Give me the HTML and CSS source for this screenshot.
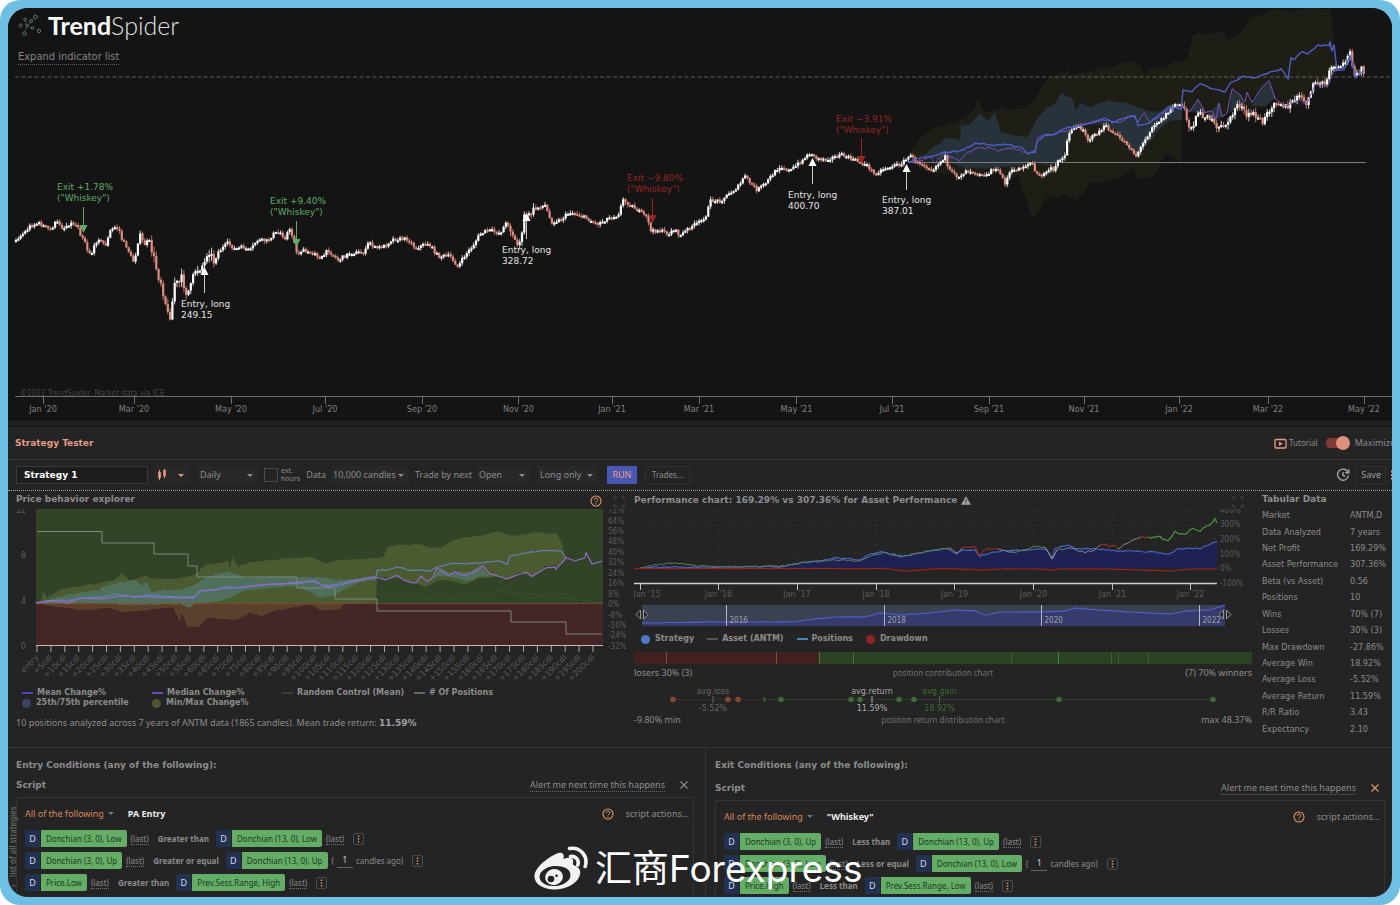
FILE: index.html
```html
<!DOCTYPE html>
<html lang="en">
<head>
<meta charset="utf-8">
<title>TrendSpider - Strategy Tester</title>
<link rel="stylesheet" href="styles.css">
</head>
<body>
<svg class="defs" aria-hidden="true">
  <symbol id="i-help" viewBox="0 0 12 12"><circle cx="6" cy="6" r="5" fill="none" stroke="currentColor" stroke-width="1.1"/><path d="M4.3 4.8a1.7 1.7 0 1 1 2.5 1.5c-.6.3-.8.6-.8 1.1" fill="none" stroke="currentColor" stroke-width="1"/><circle cx="6" cy="8.8" r=".6" fill="currentColor"/></symbol>
  <symbol id="i-expand" viewBox="0 0 12 12"><path d="M1 4V1h3M8 1h3v3M11 8v3H8M4 11H1V8" fill="none" stroke="currentColor" stroke-width="1"/></symbol>
  <symbol id="i-close" viewBox="0 0 10 10"><path d="M1.5 1.5l7 7M8.500 1.500l-7 7" fill="none" stroke="currentColor" stroke-width="1.100"/></symbol>
  <symbol id="i-more" viewBox="0 0 11 12"><rect x=".5" y=".5" width="10" height="11" rx="1.500" fill="none" stroke="#4a4a4a"/><path d="M5.500 2.500v1.600M5.500 5.200v1.600M5.500 7.900v1.600" stroke="#e09468" stroke-width="1.500"/></symbol>
</svg>

<div class="frame">
<main class="app">

<section class="price">
  <div class="price-head">
    <a class="brand" href="#">
      <svg class="brand-mark" viewBox="0 0 24 22" fill="none" stroke="#5c7b68" aria-hidden="true"><circle cx="2.500" cy="11.500" r="1.500"/><circle cx="7" cy="5.500" r="1.300"/><circle cx="9" cy="11.500" r="1.300"/><circle cx="13" cy="7" r="1.500"/><circle cx="17.500" cy="3" r="1.800"/><circle cx="14.500" cy="14" r="1.300"/><circle cx="6.500" cy="19.500" r="1.700"/><circle cx="21" cy="17" r="1.700"/><path d="M7.500 7.500l1 2.500M8.500 13l-1.500 4.500M10.500 11l1.500-2.500M14.500 5.800l1.500-1.500M10.500 12.500l2 .8" stroke-width=".6"/></svg>
      <span class="brand-name"><b>Trend</b>Spider</span>
    </a>
    <button class="link expand" type="button">Expand indicator list</button>
  </div>
  <svg class="chart" id="price-chart" viewBox="8 8 1384 417" role="img" aria-label="ANTM daily price chart"></svg>
</section>

<section class="tester">
  <div class="tester-head">
    <h1>Strategy Tester</h1>
    <div class="head-tools">
      <a class="tutorial" href="#"><svg viewBox="0 0 13 11" aria-hidden="true"><rect x="1" y="1.500" width="11" height="8.500" rx="1" fill="none" stroke="#e39a86" stroke-width="1.300"/><path d="M5 3.500l3.800 2.200L5 8z" fill="#e39a86"/></svg>Tutorial</a>
      <label class="toggle"><input type="checkbox" checked><span class="track"></span>Maximize</label>
    </div>
  </div>

  <form class="toolbar">
    <input class="name" type="text" value="Strategy 1" aria-label="Strategy name">
    <button class="candle-btn" type="button" aria-label="Chart type"><svg viewBox="0 0 10 12" aria-hidden="true"><path d="M2.500 1v10M7.500 0v9" stroke="#e39a86"/><path d="M2.500 3v6M7.500 1v6" stroke="#e39a86" stroke-width="2.600"/></svg><i class="caret"></i></button>
    <span class="pick w60"><select aria-label="Interval"><option>Daily</option></select></span>
    <label class="ext"><input type="checkbox"><span>ext.<br>hours</span></label>
    <label class="field" for="candles">Data</label>
    <span class="pick w77"><select id="candles"><option>10,000 candles</option></select></span>
    <label class="field" for="trade">Trade by next</label>
    <span class="pick w52"><select id="trade"><option>Open</option></select></span>
    <span class="pick w60"><select aria-label="Direction"><option>Long only</option></select></span>
    <button class="run" type="button">RUN</button>
    <button class="ghost" type="button">Trades...</button>
    <span class="grow"></span>
    <button class="icon-btn" type="button" aria-label="History"><svg viewBox="0 0 14 14" fill="none" stroke="#a5a5a5" stroke-width="1.400" aria-hidden="true"><path d="M12 4.200A5.500 5.500 0 1 0 12.500 7.500M12.800 1.200v3.600H9.200M7 4v3.300l2.300 1.200"/></svg></button>
    <button class="ghost save" type="button">Save</button>
    <button class="icon-btn dots" type="button" aria-label="More"><svg viewBox="0 0 4 12" aria-hidden="true"><path d="M2 1.500v2M2 5v2M2 8.500v2" stroke="#e39a86" stroke-width="2"/></svg></button>
  </form>

  <div class="results">
    <section class="col">
      <div class="col-title"><h2>Price behavior explorer</h2><svg class="ico help" aria-hidden="true"><use href="#i-help"/></svg><svg class="ico ex" aria-hidden="true"><use href="#i-expand"/></svg></div>
      <svg class="chart" id="behavior-chart" viewBox="16 509 610 179" role="img" aria-label="Price behavior after entry"></svg>
      <ul class="legend grid4">
        <li><i class="line" style="background:#4b48b8"></i>Mean Change%</li>
        <li><i class="line" style="background:#6a4ab5"></i>Median Change%</li>
        <li><i class="line" style="background:#3c3c3c"></i>Random Control (Mean)</li>
        <li><i class="line" style="background:#666"></i># Of Positions</li>
        <li><i class="dot" style="background:#3b4664"></i>25th/75th percentile</li>
        <li><i class="dot" style="background:#4d5630"></i>Min/Max Change%</li>
      </ul>
      <p class="summary">10 positions analyzed across 7 years of ANTM data (1865 candles). Mean trade return: <b>11.59%</b></p>
    </section>

    <section class="col">
      <div class="col-title perf"><h2>Performance chart: 169.29% vs 307.36% for Asset Performance</h2><svg class="warn" viewBox="0 0 12 10" aria-hidden="true"><path d="M6 0l6 10H0z" fill="#a0a0a0"/><path d="M6 3.500v3M6 7.500v1" stroke="#242424" stroke-width="1.200"/></svg><svg class="ico ex last" aria-hidden="true"><use href="#i-expand"/></svg></div>
      <svg class="chart" id="perf-chart" viewBox="634 509 620 121" role="img" aria-label="Strategy and asset performance"></svg>
      <ul class="legend flow">
        <li><i class="dot" style="background:#4c78c8"></i>Strategy</li>
        <li><i class="line" style="background:#555"></i>Asset (ANTM)</li>
        <li><i class="line" style="background:#4a86b0"></i>Positions</li>
        <li><i class="dot" style="background:#8c2622"></i>Drawdown</li>
      </ul>
      <svg class="chart" id="contrib-chart" viewBox="634 648 620 18" role="img" aria-label="Position contribution"></svg>
      <div class="ends"><span>losers 30% (3)</span><small>position contribution chart</small><span>(7) 70% winners</span></div>
      <svg class="chart" id="dist-chart" viewBox="634 681 620 32" role="img" aria-label="Position return distribution"></svg>
      <div class="ends"><span>-9.80% min</span><small>position return distribution chart</small><span>max 48.37%</span></div>
    </section>

    <section class="col">
      <div class="col-title"><h2>Tabular Data</h2></div>
      <table class="stats">
        <tr><th scope="row">Market</th><td>ANTM,D</td></tr>
        <tr><th scope="row">Data Analyzed</th><td>7 years</td></tr>
        <tr><th scope="row">Net Profit</th><td>169.29%</td></tr>
        <tr><th scope="row">Asset Performance</th><td>307.36%</td></tr>
        <tr><th scope="row">Beta (vs Asset)</th><td>0.56</td></tr>
        <tr><th scope="row">Positions</th><td>10</td></tr>
        <tr><th scope="row">Wins</th><td>70% (7)</td></tr>
        <tr><th scope="row">Losses</th><td>30% (3)</td></tr>
        <tr><th scope="row">Max Drawdown</th><td>-27.86%</td></tr>
        <tr><th scope="row">Average Win</th><td>18.92%</td></tr>
        <tr><th scope="row">Average Loss</th><td>-5.52%</td></tr>
        <tr><th scope="row">Average Return</th><td>11.59%</td></tr>
        <tr><th scope="row">R/R Ratio</th><td>3.43</td></tr>
        <tr><th scope="row">Expectancy</th><td>2.10</td></tr>
      </table>
    </section>
  </div>

  <div class="conditions">
    <section class="cond">
      <h2>Entry Conditions (any of the following):</h2>
      <div class="script-head"><h3>Script</h3><button class="link alert" type="button">Alert me next time this happens</button><button class="x" type="button" aria-label="Remove"><svg aria-hidden="true"><use href="#i-close"/></svg></button></div>
      <div class="box">
        <div class="box-head"><button class="all" type="button">All of the following<i class="caret"></i></button><b>PA Entry</b><span class="grow"></span><svg class="ico help" aria-hidden="true"><use href="#i-help"/></svg><button class="actions" type="button">script actions...</button></div>
        <div class="rule"><i class="d">D</i><button class="chip" type="button">Donchian (3, 0), Low</button><a href="#">(last)</a><b>Greater than</b><i class="d">D</i><button class="chip" type="button">Donchian (13, 0), Low</button><a href="#">(last)</a><svg class="more" aria-hidden="true"><use href="#i-more"/></svg></div>
        <div class="rule"><i class="d">D</i><button class="chip" type="button">Donchian (3, 0), Up</button><a href="#">(last)</a><b>Greater or equal</b><i class="d">D</i><button class="chip" type="button">Donchian (13, 0), Up</button><label class="ago">(<input type="text" value="1">candles ago)</label><svg class="more" aria-hidden="true"><use href="#i-more"/></svg></div>
        <div class="rule"><i class="d">D</i><button class="chip" type="button">Price.Low</button><a href="#">(last)</a><b>Greater than</b><i class="d">D</i><button class="chip" type="button">Prev.Sess.Range, High</button><a href="#">(last)</a><svg class="more" aria-hidden="true"><use href="#i-more"/></svg></div>
      </div>
    </section>
    <section class="cond exit">
      <h2>Exit Conditions (any of the following):</h2>
      <div class="script-head"><h3>Script</h3><button class="link alert" type="button">Alert me next time this happens</button><button class="x hot" type="button" aria-label="Remove"><svg aria-hidden="true"><use href="#i-close"/></svg></button></div>
      <div class="box">
        <div class="box-head"><button class="all" type="button">All of the following<i class="caret"></i></button><b>"Whiskey"</b><span class="grow"></span><svg class="ico help" aria-hidden="true"><use href="#i-help"/></svg><button class="actions" type="button">script actions...</button></div>
        <div class="rule"><i class="d">D</i><button class="chip" type="button">Donchian (3, 0), Up</button><a href="#">(last)</a><b>Less than</b><i class="d">D</i><button class="chip" type="button">Donchian (13, 0), Up</button><a href="#">(last)</a><svg class="more" aria-hidden="true"><use href="#i-more"/></svg></div>
        <div class="rule"><i class="d">D</i><button class="chip" type="button">Donchian (3, 0), Low</button><a href="#">(last)</a><b>Less or equal</b><i class="d">D</i><button class="chip" type="button">Donchian (13, 0), Low</button><label class="ago">(<input type="text" value="1">candles ago)</label><svg class="more" aria-hidden="true"><use href="#i-more"/></svg></div>
        <div class="rule"><i class="d">D</i><button class="chip" type="button">Price.High</button><a href="#">(last)</a><b>Less than</b><i class="d">D</i><button class="chip" type="button">Prev.Sess.Range, Low</button><a href="#">(last)</a><svg class="more" aria-hidden="true"><use href="#i-more"/></svg></div>
      </div>
    </section>
  </div>
  <a class="side" href="#"><span>&#8250;</span>list of all strategies</a>
</section>

</main>
<div class="watermark">
  <svg viewBox="0 0 56 46" aria-hidden="true">
    <path d="M22 8c5-2.500 9-1 7.500 5 6-2.500 11-1 9.500 4-.4 1.500.2 2 1.500 2.500 5 1.800 7 5.500 5 10.500C42.500 38 32 43.500 20.500 43.500 9 43.500.5 38 .5 30.500.500 22 13 12 22 8z" fill="#f2f2f2"/>
    <ellipse cx="21" cy="30" rx="15.500" ry="10" transform="rotate(-6 21 30)" fill="#242424"/>
    <ellipse cx="20" cy="31" rx="9" ry="8" transform="rotate(-15 20 31)" fill="#f2f2f2"/>
    <circle cx="17" cy="33" r="3.300" fill="#242424"/><circle cx="22.500" cy="29.800" r="1.300" fill="#242424"/>
    <path d="M36.500 10.500c5-1 9 3.500 7.300 8.500M35.500 2.500c10.500-2 19 7.500 15.700 18" fill="none" stroke="#f2f2f2" stroke-width="3.600" stroke-linecap="round"/>
  </svg>
  <span>汇商Forexpress</span>
</div>
</div>
<script src="charts.js"></script>
</body>
</html>
```
FILE: styles.css
```css
* { box-sizing: border-box; }
body { margin: 0; background: #fff; font: 9px/16px "Noto Sans", sans-serif; color: #8c8c8c; }
h1, h2, h3, p, ul { margin: 0; padding: 0; }
h1, h2, h3 { font: bold 9px/16px "DejaVu Sans", sans-serif; }
ul { list-style: none; }
a { color: inherit; text-decoration: none; }
button, input, select { font: inherit; color: inherit; background: none; border: 0; padding: 0; margin: 0; border-radius: 0; }
.defs { position: absolute; width: 0; height: 0; }
.chart { display: block; width: 100%; height: auto; }
.grow { flex: 1; }
.caret { display: inline-block; border: 3px solid transparent; border-top-color: currentColor; border-bottom: 0; }

.frame { position: relative; height: 100vh; padding: 8px; background: #6fbfe5; border-radius: 20px; overflow: hidden; }
.app { height: 100%; display: flex; flex-direction: column; background: #242424; border-radius: 20px; overflow: hidden; }

/* price chart */
.price { position: relative; background: #141414; }
.price-head { position: absolute; top: 4px; left: 10px; display: flex; flex-direction: column; align-items: flex-start; gap: 12px; }
.brand { display: flex; align-items: center; gap: 6px; height: 26px; color: #e0e0e0; }
.brand-mark { width: 24px; height: 22px; }
.brand-name { font: 300 25px/26px Lato, sans-serif; }
.brand-name b { font-weight: 700; color: #fff; }
.link { border-bottom: 1px dotted #666; line-height: 12px; }
.expand { font: 11px/14px "DejaVu Sans Condensed", "DejaVu Sans", sans-serif; color: #858585; }

/* strategy tester */
.tester { position: relative; flex: 1; min-height: 0; display: flex; flex-direction: column; border-top: 2px solid #191919; }
.tester-head { flex: none; height: 33px; padding: 0 0 0 7px; display: flex; align-items: center; justify-content: space-between; border-bottom: 1px dotted #444; }
h1 { color: #e39a86; }
.head-tools { display: flex; align-items: center; gap: 8px; margin-right: -3px; }
.tutorial { display: flex; align-items: center; gap: 2px; font-size: 8px; }
.tutorial svg { width: 13px; height: 11px; }
.toggle { display: flex; align-items: center; gap: 5px; }
.toggle input { position: absolute; opacity: 0; }
.track { width: 24px; height: 14px; display: flex; justify-content: flex-end; background: linear-gradient(#7f3a34, #7f3a34) 0 50% / 18px 10px no-repeat; border-radius: 7px; }
.track::after { content: ""; width: 14px; height: 14px; border-radius: 50%; background: #de8f7e; }

.toolbar { flex: none; height: 31px; padding: 0 0 0 8px; display: flex; align-items: center; border-bottom: 1px dotted #a0a0a0; }
.name { width: 132px; height: 18px; margin-right: 7px; padding: 0 7px; background: #1d1d1d; border: 1px solid #3a3a3a; color: #fff; font: bold 9px/16px "DejaVu Sans", sans-serif; }
.candle-btn { width: 34px; height: 18px; margin-right: 9px; display: flex; align-items: center; justify-content: space-between; padding: 0 5px 0 2px; background: #282828; color: #e39a86; }
.candle-btn svg { width: 10px; height: 12px; }
.pick { position: relative; height: 18px; display: flex; background: #282828; }
.pick::after { content: ""; position: absolute; right: 5px; top: 8px; border: 3px solid transparent; border-top-color: #8c8c8c; border-bottom: 0; pointer-events: none; }
.pick select { width: 100%; appearance: none; padding: 0 2px; }
.w52 { width: 53px; margin-right: 8px; }
.w60 { width: 60px; margin-right: 6px; }
.w77 { width: 78px; margin-right: 6px; }
.ext { display: flex; align-items: center; gap: 3px; font-size: 7px; line-height: 8px; margin-right: 6px; }
.ext input { appearance: none; width: 14px; height: 14px; border: 1px solid #4a4a4a; }
.field { margin-right: 5px; }
.run { width: 30px; height: 18px; margin: 0 8px 0 3px; background: #4856b4; color: #e3a27a; }
.ghost { height: 18px; padding: 0 6px; border: 1px solid #2e2e2e; font-size: 8px; line-height: 14px; }
.icon-btn { display: flex; margin-right: 6px; }
.icon-btn svg { width: 14px; height: 14px; }
.save { padding: 0 4px; font-size: 9px; color: #a0a0a0; margin-right: 4px; }
.dots { margin-right: -2px; }
.dots svg { width: 4px; height: 12px; }

.results { flex: none; height: 257px; padding: 0 0 0 8px; display: grid; grid-template-columns: 610fr 620fr 130fr; gap: 8px; border-bottom: 1px dotted #444; }
.col { min-width: 0; }
.col-title { height: 18px; display: flex; align-items: flex-start; }
.col-title h2 { flex: none; }
.perf { align-items: center; }
.ico { width: 12px; height: 12px; flex: none; }
.help { color: #e39a68; }
.ex { color: #55443f; }
.col-title .help { margin: 4px 11px 0 auto; }
.col-title .help + .ex { margin: 5px 1px 0 0; }
.last { margin: 4px 10px 0 auto; }
.warn { width: 10px; height: 9px; margin-left: 4px; }
.legend { font: bold 8px/10px "DejaVu Sans", sans-serif; }
.legend li { display: flex; align-items: center; gap: 4px; white-space: nowrap; }
.line { width: 11px; height: 2px; }
.dot { width: 9px; height: 9px; border-radius: 50%; margin-right: 1px; }
.grid4 { display: grid; grid-template-columns: 130px 130px 132px 120px; padding-left: 6px; }
.flow { display: flex; gap: 13px; height: 18px; align-items: center; padding-left: 7px; }
.summary { line-height: 30px; white-space: nowrap; }
.summary b { font: bold 9px/30px "DejaVu Sans", sans-serif; color: #a0a0a0; }
.ends { display: grid; grid-template-columns: 1fr auto 1fr; height: 15px; line-height: 14px; padding-right: 2px; }
.ends span:last-child { text-align: right; }
.ends small { font-size: 8px; color: #707070; }
.stats { width: 100%; height: 230px; margin-top: -2px; border-collapse: collapse; font: 9px/12px "DejaVu Sans Condensed", "DejaVu Sans", sans-serif; }
.stats th { width: 88px; padding: 0; text-align: left; font-weight: normal; white-space: nowrap; }
.stats td { padding: 0; white-space: nowrap; }

/* conditions */
.conditions { flex: 1; min-height: 0; display: grid; grid-template-columns: 698fr 686fr; }
.cond { min-width: 0; display: flex; flex-direction: column; padding: 9px 11px 0 8px; border-right: 1px dotted #484848; }
.exit { padding: 9px 7px 0 9px; border-right: 0; }
.script-head { display: flex; align-items: center; height: 16px; margin: 4px 0; }
.exit .script-head { margin-top: 7px; }
.script-head h3 { flex: 1; }
.x { display: flex; margin: 0 5px 0 14px; }
.x svg { width: 10px; height: 10px; }
.hot { color: #e39a68; }
.box { flex: 1; border: 1px solid #343434; border-bottom: 0; padding: 8px 4px 0 8px; display: flex; flex-direction: column; gap: 5px; }
.box-head { display: flex; align-items: center; height: 16px; margin-bottom: 3px; }
.box-head b { color: #eee; }
.all { color: #d9865c; margin-right: 14px; }
.all .caret { color: #777; margin-left: 4px; vertical-align: 2px; }
.actions { margin-left: 12px; }
.rule { display: flex; align-items: center; flex: none; height: 17px; font-size: 8px; white-space: nowrap; }
.d { width: 15px; height: 17px; margin-right: 1px; background: #223150; color: #d5dbe8; font: 9px/17px "Noto Sans", sans-serif; text-align: center; border-radius: 2px 0 0 2px; }
.chip { height: 17px; padding: 0 5px; background: #64ad66; color: #1c3a20; border-radius: 0 2px 2px 0; }
.rule a { margin: 0 9px 0 4px; border-bottom: 1px dotted #777; line-height: 11px; }
.rule b { margin-right: 7px; }
.ago { display: flex; align-items: center; margin: 0 9px 0 4px; gap: 3px; }
.ago input { width: 16px; height: 14px; border-bottom: 1px solid #666; text-align: center; color: #ccc; font-size: 9px; }
.more { width: 11px; height: 12px; }
.side { position: absolute; left: 0; bottom: 10px; display: flex; gap: 8px; writing-mode: vertical-rl; transform: rotate(180deg); font-size: 8px; line-height: 10px; color: #777; }

.watermark { position: absolute; left: 534px; bottom: 13px; display: flex; align-items: center; gap: 5px; color: #fff; }
.watermark svg { width: 56px; height: 46px; }
.watermark span { font: 37px/46px Inter, "Noto Sans CJK SC", sans-serif; }
```
FILE: charts.js
```js
(function () {
  let seed = 7;
  const rnd = () => (seed = (seed * 16807) % 2147483647) / 2147483647;
  const pts = s => s.trim().split(/\s+/).map(p => p.split(',').map(Number));
  const d = a => 'M' + a.map(p => p[0].toFixed(1) + ' ' + p[1].toFixed(1)).join('L');

  /* adds intermediate points with small noise between the given ones */
  function rough(a, step, amp) {
    const out = [];
    for (let i = 0; i < a.length - 1; i++) {
      const [x0, y0] = a[i], [x1, y1] = a[i + 1];
      const n = Math.max(1, Math.round(Math.abs(x1 - x0) / step));
      for (let k = 0; k < n; k++) {
        const t = k / n;
        out.push([x0 + (x1 - x0) * t, y0 + (y1 - y0) * t + (i + k ? (rnd() - 0.5) * 2 * amp : 0)]);
      }
    }
    out.push(a[a.length - 1]);
    return out;
  }
  const area = (s, fill, amp) => `<path d="${d(rough(pts(s), 3, amp || 0))}Z" fill="${fill}"/>`;
  const line = (s, stroke, w, amp, extra) => `<path d="${d(rough(pts(s), 3, amp || 0))}" fill="none" stroke="${stroke}" stroke-width="${w}" ${extra || ''}/>`;
  const text = (x, y, s, cls, fill, anchor) => `<text x="${x}" y="${y}" font-family="${cls}" font-size="9" fill="${fill}" text-anchor="${anchor || 'start'}">${s}</text>`;
  const DV = 'DejaVu Sans', DC = 'DejaVu Sans Condensed';
  const put = (id, s) => { document.getElementById(id).innerHTML = s; };

  /* ---- price chart ---- */
  const path = pts(`15,240 20,236 25,232 30,226 38,223 44,226 50,230 56,222 60,224 63,229 67,225 72,223 78,226 81,236 84,238 88,252 92,253 98,237 102,243 107,245 109,232 115,227 119,229 122,240 127,247 133,262 137,250 139,232 144,245 149,240 153,255 158,275 161,282 165,300 169,321 172,305 175,280 178,285 182,278 186,292 190,290 195,270 200,268 205,262 208,248 214,262 218,252 228,243 235,249 243,247 250,251 257,240 268,241 273,234 280,232 285,238 289,229 294,240 297,255 302,250 308,253 315,252 320,260 328,250 338,260 350,253 365,252 369,241 375,248 385,246 392,239 408,239 415,248 428,243 438,256 450,256 458,267 465,255 472,247 480,234 488,230 500,233 507,222 513,235 517,246 522,235 525,210 528,217 535,208 545,205 551,222 560,220 570,212 580,215 597,224 610,217 618,215 623,200 632,206 640,212 648,218 650,232 658,230 670,234 673,228 680,236 690,227 700,222 706,215 711,200 720,201 730,193 740,185 744,175 750,183 757,190 765,184 772,175 780,166 790,171 800,162 811,152 815,158 826,159 842,155 855,160 868,166 874,174 885,168 900,164 906,160 909,155 915,160 925,165 932,170 940,162 945,156 948,170 958,177 967,170 975,172 988,175 992,168 1000,173 1005,183 1010,172 1020,168 1032,162 1036,175 1043,175 1050,168 1054,172 1058,160 1065,155 1068,135 1073,127 1083,128 1088,140 1095,135 1105,126 1113,133 1120,138 1128,145 1136,156 1145,140 1153,125 1163,118 1175,104 1184,107 1188,125 1192,128 1196,115 1208,115 1217,130 1230,120 1238,102 1247,117 1253,113 1263,123 1270,108 1275,100 1288,108 1297,96 1307,103 1315,82 1325,84 1333,65 1340,70 1350,53 1355,75 1361,68 1364,76`);
  function at(x) {
    for (let i = 1; i < path.length; i++) if (x <= path[i][0]) {
      const [a, b] = path[i - 1], [c, e] = path[i];
      return b + (e - b) * (x - a) / (c - a);
    }
    return path[path.length - 1][1];
  }
  let s = '';
  s += area('908,160 912,150 920,138 935,127 955,123 965,118 975,108 977,98 985,112 1000,108 1010,110 1025,108 1035,99 1045,82 1055,75 1060,72 1066,73 1067,62 1069,75 1080,73 1090,72 1100,68 1115,66 1128,60 1138,63 1145,75 1152,67 1165,68 1172,63 1185,60 1190,50 1193,35 1205,33 1215,33 1222,30 1228,42 1240,33 1250,18 1262,15 1275,9 1290,12 1300,9 1330,9 1334,40 1336,75 1325,85 1315,86 1307,104 1298,106 1283,104 1275,98 1265,108 1252,108 1245,104 1238,106 1230,112 1222,118 1216,122 1205,115 1190,112 1183,110 1181,165 1175,157 1165,153 1155,175 1145,178 1138,178 1133,168 1120,178 1105,182 1090,183 1082,195 1075,200 1065,193 1058,198 1048,195 1040,208 1032,220 1028,205 1022,190 1018,175 1010,178 990,170 960,175 930,172 915,165', '#1f1e16', 1);
  const blue = '#28323a';
  s += area('918,157 930,150 940,143 945,137 960,140 961,125 970,124 980,113 988,121 995,112 1001,133 1015,135 1028,137 1035,122 1045,110 1055,103 1062,93 1072,98 1076,112 1080,103 1090,107 1108,100 1125,103 1145,110 1160,112 1170,104 1182,105 1182,120 1170,120 1160,128 1150,142 1145,145 1136,156 1125,140 1115,130 1105,126 1090,122 1072,130 1065,150 1060,162 1045,165 1030,160 1020,166 990,168 965,168 950,162 930,158', blue, 1);
  s += area('1190,111 1198,99 1206,115 1212,110 1219,103 1222,117 1214,120 1204,114', blue);
  s += area('1230,112 1232,89 1240,95 1245,104', blue);
  s += area('1252,106 1262,87 1269,80 1276,98 1265,106', blue);
  s += '<path d="M15 77H1390" stroke="#5e5e5e" stroke-dasharray="4 2.500"/><path d="M908 162.500H1366" stroke="#7c7c7c"/>';
  let prev = at(15);
  for (let x = 16; x < 1365; x += 2.3) {
    const wild = x > 150 && x < 215 ? 4 : x > 1180 ? 3 : x > 510 && x < 540 ? 3 : 1.7;
    const c = at(x) + (rnd() - 0.5) * wild * 2.2;
    const col = c <= prev + 0.4 ? '#fff' : '#e08c7e';
    const hi = Math.min(c, prev) - rnd() * wild * 1.5 - 0.4, lo = Math.max(c, prev) + rnd() * wild * 1.5 + 0.4;
    const h = Math.max(2, Math.abs(c - prev));
    s += `<path d="M${x.toFixed(1)} ${hi.toFixed(1)}V${lo.toFixed(1)}" stroke="${col}" stroke-width=".8"/><rect x="${(x - 1.1).toFixed(1)}" y="${Math.min(c, prev).toFixed(1)}" width="2.200" height="${h.toFixed(1)}" fill="${col}"/>`;
    prev = c;
  }
  s += line('908,162 920,161 930,158 935,163 945,152 950,157 960,160 967,153 976,148 990,148 998,151 1010,148 1020,150 1028,154 1035,150 1038,137 1050,135 1065,131 1090,122 1105,120 1120,122 1132,115 1138,122 1144,112 1150,123 1165,112 1181,106 1190,111 1198,99 1205,112 1212,110 1216,120 1219,103 1222,117 1227,113 1232,89 1240,95 1245,102 1247,92 1252,103 1262,87 1269,80 1275,98 1285,106 1300,100 1307,104 1315,85 1328,85 1334,70 1345,70', '#7852bd', 1, 0.8);
  s += line('908,162 920,158 932,156 945,152 960,151 976,143 990,145 1005,144 1020,147 1028,153 1035,152 1037,142 1045,135 1055,134 1065,128 1080,126 1095,122 1105,118 1112,123 1125,118 1135,116 1138,125 1148,124 1160,114 1170,107 1181,109 1183,90 1192,92 1200,83 1210,88 1225,92 1231,83 1243,76 1255,78 1270,72 1281,69 1288,79 1291,57 1294,60 1302,52 1308,54 1318,45 1329,46 1330,42 1332,52 1334,45 1337,70 1345,68 1350,55 1356,78 1364,70', '#4c5fc4', 1.4, 0.8);
  const exit = (x, y0, y1, tx, ty, v, c) => `<path d="M${x} ${y0}V${y1 - 6}" stroke="${c}"/><path d="M${x - 4} ${y1 - 8}h8l-4 8z" fill="${c}"/>` + text(tx, ty, 'Exit ' + v, DV, c) + text(tx, ty + 11, '("Whiskey")', DV, c);
  const entry = (x, y0, y1, tx, ty, v) => `<path d="M${x} ${y0 + 6}V${y1}" stroke="#ccc"/><path d="M${x - 4} ${y0 + 8}h8l-4-8z" fill="#fff"/>` + text(tx, ty, 'Entry, long', DV, '#e4e4e4') + text(tx, ty + 11, v, DV, '#e4e4e4');
  s += exit(83.5, 207, 233, 57, 190, '+1.78%', '#5faa64') + exit(296.500, 221, 247, 270, 204, '+9.40%', '#5faa64');
  s += exit(652.5, 198, 223, 627, 181, '−9.80%', '#962622') + exit(861.5, 138, 164, 836, 122, '−3.91%', '#962622');
  s += entry(204.5, 267, 293, 181, 307, '249.15') + entry(526.5, 213, 239, 502, 253, '328.72') + entry(812.5, 158, 184, 788, 198, '400.70') + entry(906.5, 164, 190, 882, 203, '387.01');
  s += `<text x="20" y="396" font-family="${DC}" font-size="8" fill="#444">©2022 TrendSpider. Market data via ICE</text>`;
  s += '<path d="M15 396.500H1392" stroke="#6e6e6e"/>';
  [['Jan \'20', 43], ['Mar \'20', 134], ['May \'20', 231], ['Jul \'20', 325], ['Sep \'20', 422], ['Nov \'20', 518.500], ['Jan \'21', 612], ['Mar \'21', 699], ['May \'21', 796.500], ['Jul \'21', 892], ['Sep \'21', 989], ['Nov \'21', 1084], ['Jan \'22', 1179], ['Mar \'22', 1268], ['May \'22', 1364]].forEach(([t, x]) => {
    s += `<path d="M${Math.floor(x) + 0.5} 397v7" stroke="#6e6e6e"/>` + `<text x="${x}" y="412" font-family="${DC}" font-size="9" fill="#808080" text-anchor="middle">${t}</text>`;
  });
  s += '<rect x="8" y="421" width="1384" height="4" fill="#1f1f1f"/>';
  put('price-chart', s);

  /* ---- price behavior explorer ---- */
  s = '<rect x="36" y="509" width="567" height="95" fill="#314428"/><rect x="36" y="604" width="567" height="41" fill="#432625"/>';
  s += area('36,603 42,600 43,590 47,598 60,590 80,586 100,583 115,580 122,573 130,581 145,576 150,578 175,579 190,576 197,573 205,565 215,564 228,561 230,570 232,557 238,567 250,562 270,560 290,558 310,557 325,563 340,560 360,559 375,558 383,557 388,546 400,545 420,544 428,547 440,548 455,539 470,537 480,536 490,533 500,531 510,536 525,534 540,532 557,534 562,543 566,560 559,566 545,566 532,577 520,572 510,579 495,577 480,578 465,585 450,580 440,580 425,587 415,583 397,578 377,577 376,603', '#4b5a30', 0.6);
  s += area('36,603 52,600 85,598 118,594 200,591 240,588 300,583 300,588 270,588 245,590 230,602 205,603', '#47602f');
  s += area('376,603 345,603 340,609 320,610 310,605 290,608 275,611 262,616 250,613 235,620 220,619 208,618 200,626 188,628 182,613 180,622 173,607 150,610 125,612 110,608 80,610 50,606 36,603', '#5b412b', 0.6);
  s += area('36,603 50,600 70,594 85,592 100,590 102,587 120,582 135,580 142,586 147,582 152,592 165,590 180,590 195,585 205,578 215,575 228,572 240,575 245,578 265,577 300,577 320,577 340,580 360,578 376,576 376,580 360,582 345,589 335,595 320,598 312,593 295,586 270,588 245,590 235,596 215,602 195,604 190,608 180,604 125,605 100,603 36,604', '#50705e', 0.6);
  s += area('433,578 440,568 450,573 460,572 470,572 480,566 487,573 490,577 480,576 470,581 450,577 440,576', '#50705e');
  s += '<path d="M377 602L400 593 430 597 460 600 500 591 550 596 602 603" fill="none" stroke="#51634a" stroke-dasharray="1 3"/>';
  s += '<path d="M36 603.500H603" stroke="#96482e" stroke-dasharray="2 1"/>';
  s += '<path d="M37 531.500H102V543H154V554H188V566H197V577H297V588H335V599H377V611H511V622H566V634H602" fill="none" stroke="#7c8a7c"/>';
  s += line('36,603 52,601 70,600 85,598 100,597 118,594 135,597 150,595 175,597 195,597 200,591 215,590 225,587 240,588 260,585 280,584 300,583 312,581 322,585 335,585 350,581 376,577 377,570 388,570 397,567 410,570 430,571 437,567 450,564 475,563 500,561 507,564 510,556 525,553 540,551 555,550 562,552 566,558', '#6480b0', 1.2, 0.5);
  s += line('36,603 52,600 68,603 80,598 100,599 120,596 150,597 180,598 193,598 200,591 230,588 260,585 290,583 315,581 325,587 340,585 360,580 376,577 385,580 397,575 405,581 416,583 421,576 427,582 433,577 437,568 448,575 455,572 465,576 475,571 483,566 490,574 502,577 505,579 515,576 527,572 532,577 545,568 555,567 556,569 566,558 575,561 585,558 586,553 592,564 602,561', '#9468cc', 1.2, 0.4);
  s += '<path d="M36 645.500H603" stroke="#c8b4b4"/>';
  for (let i = 0; i <= 40; i++) {
    const x = 37 + i * 13.9;
    s += `<path d="M${x.toFixed(1)} 646v6" stroke="#b0a8a8"/><text transform="translate(${(x + 2).toFixed(1)} 658) rotate(-45)" font-family="${DV}" font-size="8" fill="#5c5c5c" text-anchor="end">${i ? '+' + i * 5 + 'cdl' : 'entry'}</text>`;
  }
  [['12', 513], ['8', 558], ['4', 604], ['0', 649]].forEach(([t, y]) => { s += text(26, y, t, DC, '#5c5c5c', 'end'); });
  for (let i = 0; i < 14; i++) s += `<text x="608" y="${(513 + i * 10.45).toFixed(1)}" font-family="${DC}" font-size="8" fill="#5c5c5c">${72 - i * 8}%</text>`;
  put('behavior-chart', s);

  /* ---- performance chart ---- */
  s = '';
  const ticks = [640, 718.5, 797, 876, 954.500, 1033.500, 1112.500, 1190.500];
  s += '<path d="M634 524.500H1217M634 538.500H1217M634 553.500H1217M718.500 509V568M797.500 509V568M876.500 509V568M954.500 509V568M1033.500 509V568M1112.500 509V568M1190.500 509V568" stroke="#333" stroke-dasharray="2 3"/>';
  const strat = '640,568 660,567 700,567 785,567 790,565 805,562 820,561 835,558 850,559 860,560 868,555 875,553 882,551 890,554 905,556 920,553 935,550 950,549 955,553 960,551 975,550 980,556 990,553 1000,551 1020,550 1040,549 1047,550 1052,558 1055,548 1068,545 1075,548 1100,549 1120,551 1135,551 1150,552 1170,554 1177,549 1190,548 1200,549 1210,544 1217,542';
  s += area(strat + ' 1217,568', '#1e2152');
  s += line(strat, '#4c66c8', 1.1, 0.7);
  s += line('640,568 655,565 675,563 690,565 720,567 785,566 800,563 835,560 860,561 875,555 885,553 900,557 920,553 935,550 950,548', '#5d8050', 1, 0.7);
  s += line('950,548 957,554 962,548', '#888', 1, 1) + line('962,548 975,547 979,555 985,549 998,549', '#b03028', 1, 1) + line('998,549 1012,552', '#888', 1, 1);
  s += line('1012,552 1025,550 1035,547 1045,547', '#5d9050', 1, 1) + line('1045,547 1052,560 1057,550', '#999', 1, 1) + line('1057,550 1068,548', '#5d9050', 1, 1);
  s += line('1068,548 1085,552 1095,550 1100,545', '#888', 1, 1) + line('1100,545 1115,546 1118,549', '#b03028', 1, 1) + line('1118,549 1130,541 1140,537', '#888', 1, 1) + line('1140,537 1148,537', '#b03028', 1, 0.6);
  s += line('1148,537 1160,537 1168,540 1175,532 1185,534 1193,528 1200,531 1210,524 1215,520 1217,523', '#4f8a48', 1.3, 1.5);
  s += line('634,568.500 885,568.500 905,571 940,568.500 960,569 980,570 1000,569 1040,569 1052,570 1060,569 1110,569 1140,570 1170,571 1190,569 1217,569', '#98241e', 1.2, 0.2);
  s += '<path d="M634 583.500H1217" stroke="#d0d0d0" stroke-width="1.300"/>';
  ticks.forEach((x, i) => { s += `<path d="M${Math.floor(x) + 0.5} 584v6" stroke="#c0c0c0"/>` + `<text x="${i ? x : 647}" y="597" font-family="${DV}" font-size="8" fill="#5c5c5c" text-anchor="middle">Jan '${15 + i}</text>`; });
  ['400%', '300%', '200%', '100%', '0%', '-100%'].forEach((t, i) => { s += `<text x="1220" y="${(512.500 + i * 14.7).toFixed(1)}" font-family="${DC}" font-size="8" fill="#5c5c5c">${t}</text>`; });
  const nav = '642,623 710,622 793,622 815,619 835,617 865,617 880,613 900,615 930,613 955,610 975,611 985,615 1000,612 1040,612 1065,611 1075,608 1100,610 1130,612 1170,614 1185,611 1210,610 1225,605';
  s += '<rect x="642" y="605" width="583" height="21" fill="#3a4150"/>' + area(nav + ' 1225,626 642,626', '#363b6c') + line(nav, '#4f60c4', 1.2, 0.2);
  [[726.500, 2016], [884.500, 2018], [1041.500, 2020], [1199.500, 2022]].forEach(([x, t]) => { s += `<path d="M${x} 605v21" stroke="#b4b8c4"/>` + `<text x="${x + 3}" y="623" font-family="${DC}" font-size="8" fill="#a0a0a8">${t}</text>`; });
  [642, 1225].forEach(x => { s += `<path d="M${x - 1.500} 610v9l-4.500-4.500zM${x + 1.500} 610v9l4.500-4.500z" fill="#242424" stroke="#999"/>`; });
  put('perf-chart', s);

  /* ---- contribution bar ---- */
  s = '<rect x="634" y="652" width="185" height="12" fill="#41211f"/><rect x="819" y="652" width="433" height="12" fill="#2b4224"/>';
  [[666, '#6a5a3c'], [776, '#6a5a3c'], [819, '#5a7a3c'], [853, '#4c7038'], [1011, '#3e6030'], [1058, '#4c7c3c'], [1111, '#3e6030'], [1118, '#3e6030'], [1148, '#3e6030']].forEach(([x, c]) => { s += `<path d="M${x + 0.5} 652v12" stroke="${c}"/>`; });
  put('contrib-chart', s);

  /* ---- return distribution ---- */
  s = '<path d="M673 699.500H764" stroke="#3c2824"/><path d="M764 699.500H1213" stroke="#2c4028"/>';
  [673, 728, 738].forEach(x => { s += `<circle cx="${x}" cy="699.500" r="2.800" fill="#8a4630"/>`; });
  [781, 851, 860, 899, 914, 1059, 1213].forEach(x => { s += `<circle cx="${x}" cy="699.500" r="2.800" fill="#3f6a38"/>`; });
  s += '<path d="M764.500 697.500v4" stroke="#3f7a38" stroke-width="1.500"/>';
  [[713, 'avg.loss', '-5.52%', '#666'], [872, 'avg.return', '11.59%', '#a8a8a8'], [939.500, 'avg.gain', '18.92%', '#3f6b32']].forEach(([x, a, b, c]) => {
    s += `<path d="M${x} 696v7" stroke="${c}"/><text x="${x}" y="694" font-family="${DV}" font-size="8" fill="${c}" text-anchor="middle">${a}</text><text x="${x}" y="711" font-family="${DV}" font-size="8" fill="${c}" text-anchor="middle">${b}</text>`;
  });
  put('dist-chart', s);
})();
```
